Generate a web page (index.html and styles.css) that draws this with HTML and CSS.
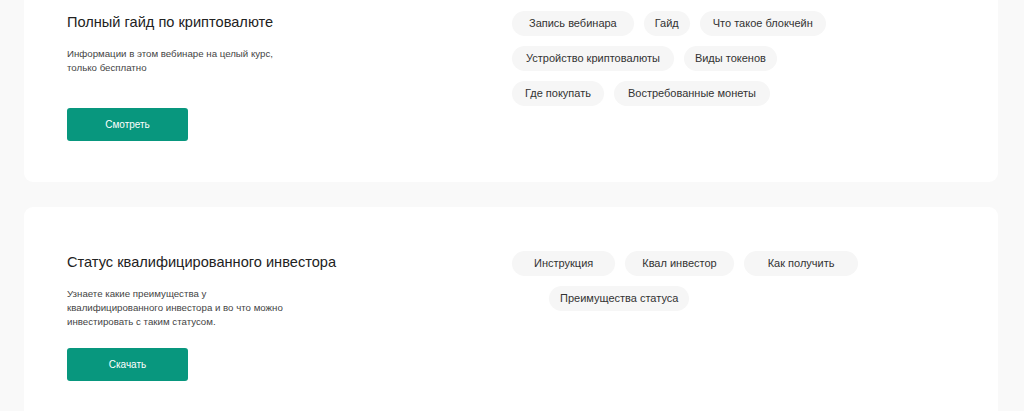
FILE: index.html
```html
<!DOCTYPE html>
<html lang="ru">

<head>
    <meta charset="UTF-8">
    <meta name="viewport" content="width=device-width, initial-scale=1.0">
    <title>Материалы</title>
    <link rel="stylesheet" href="styles.css">
</head>

<body>
    <main class="materials">
        <!-- Гайд -->
        <section class="card">
            <div class="card-info">
                <h2 class="card-title">Полный гайд по криптовалюте</h2>
                <p class="card-text">Информации в этом вебинаре на целый курс, только бесплатно</p>
                <button class="card-btn" type="button">Смотреть</button>
            </div>
            <div class="tags">
                <div class="tags-row">
                    <span class="tag tag--w17">Запись вебинара</span>
                    <span class="tag tag--w11">Гайд</span>
                    <span class="tag tag--w13">Что такое блокчейн</span>
                </div>
                <div class="tags-row">
                    <span class="tag">Устройство криптовалюты</span>
                    <span class="tag tag--w11">Виды токенов</span>
                </div>
                <div class="tags-row">
                    <span class="tag tag--w13">Где покупать</span>
                    <span class="tag">Востребованные монеты</span>
                </div>
            </div>
        </section>

        <!-- Квал инвестор -->
        <section class="card">
            <div class="card-info">
                <h2 class="card-title">Статус квалифицированного инвестора</h2>
                <p class="card-text">Узнаете какие преимущества у квалифицированного инвестора и во что можно инвестировать с таким статусом.</p>
                <button class="card-btn" type="button">Скачать</button>
            </div>
            <div class="tags">
                <div class="tags-row">
                    <span class="tag tag--w22">Инструкция</span>
                    <span class="tag tag--w17">Квал инвестор</span>
                    <span class="tag tag--w24">Как получить</span>
                </div>
                <div class="tags-row tags-row--shift">
                    <span class="tag tag--w11">Преимущества статуса</span>
                </div>
            </div>
        </section>
    </main>
</body>

</html>
```

FILE: styles.css
```css
body {
    font-family: 'Liberation Sans', Arial, sans-serif;
    margin: 0;
    padding: 0;
    background-color: #f9f9f9;
    color: #222;
}

.materials {
    display: grid;
    gap: 25px;
    margin: -33px 26px 0 24px;
}

.card {
    display: grid;
    grid-template-columns: 445px 1fr;
    background-color: white;
    border-radius: 9px;
    padding: 45px 43px 41px;
}

.card-title {
    margin: 0;
    font-size: 14.6px;
    font-weight: normal;
    line-height: 20px;
    color: #222;
}

.card-text {
    width: 225px;
    min-height: 56px;
    margin: 15px 0 5px;
    font-size: 9.7px;
    line-height: 14px;
    color: #444;
}

.card-btn {
    width: 121px;
    height: 33px;
    background-color: #08977e;
    color: white;
    font-family: inherit;
    font-size: 10px;
    border: none;
    border-radius: 3px;
    cursor: pointer;
}

.tags {
    display: grid;
    gap: 10px;
    align-content: start;
    margin-top: -1px;
}

.tags-row {
    display: flex;
    gap: 10px;
}

.tags-row--shift {
    margin-left: 37px;
}

.tag {
    height: 25px;
    line-height: 25px;
    padding: 0 14px;
    border-radius: 13px;
    background-color: #f6f6f6;
    font-size: 11px;
    color: #333;
    white-space: nowrap;
}

.tag--w11 {
    padding: 0 11px;
}

.tag--w13 {
    padding: 0 13px;
}

.tag--w17 {
    padding: 0 17px;
}

.tag--w22 {
    padding: 0 22px;
}

.tag--w24 {
    padding: 0 24px;
}
```
